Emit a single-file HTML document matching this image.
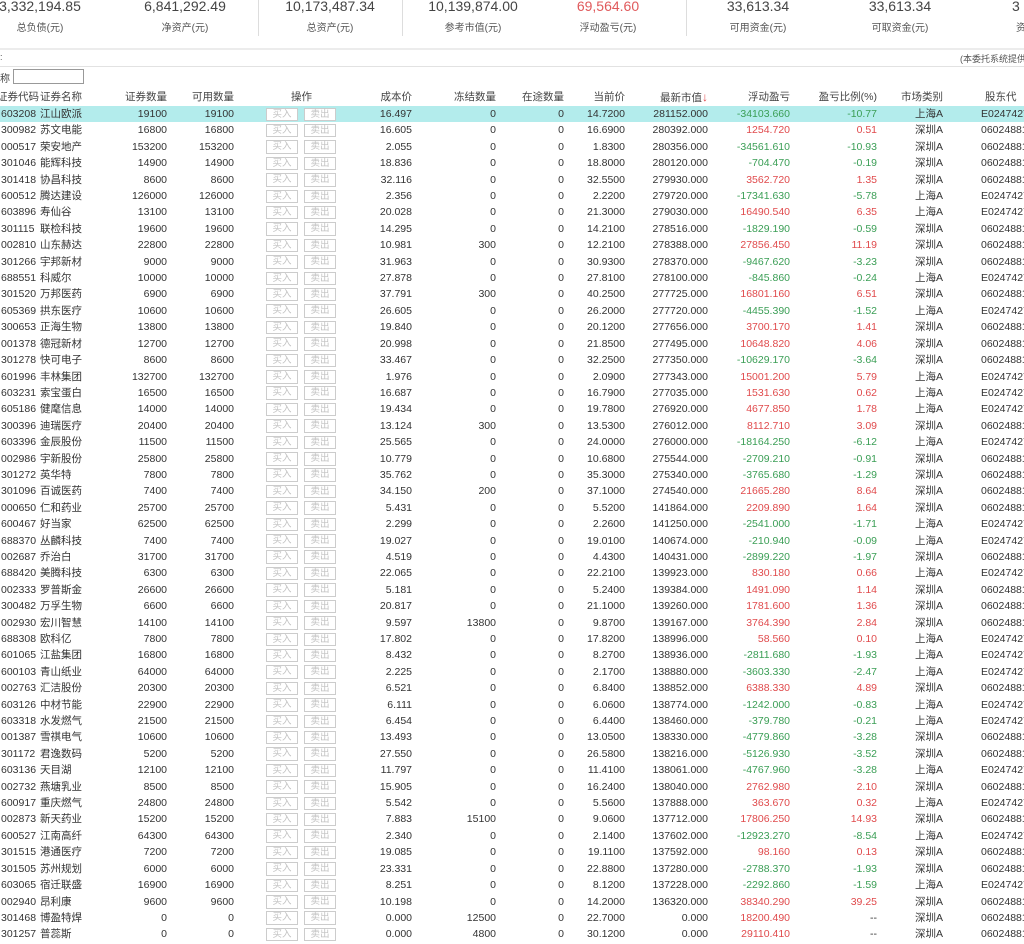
<!DOCTYPE html>
<html><head><meta charset="utf-8"><style>
*{margin:0;padding:0;box-sizing:border-box}
body{width:1024px;height:944px;overflow:hidden;background:#fff;font-family:"Liberation Sans","Noto Sans CJK SC",sans-serif;color:#333;position:relative}
.v{position:absolute;top:-2px;font-size:14px;color:#444;text-align:center;width:140px}
.l{position:absolute;top:19px;font-size:10px;color:#555;text-align:center;width:140px}
.sep{position:absolute;top:0;width:1px;height:36px;background:#ddd}
.hr{position:absolute;left:0;width:1024px;height:1px;background:#e2e2e2}
#t{position:absolute;left:0;top:89px;width:1024px;font-size:10.5px}
.r{position:relative;height:16.42px;line-height:16.42px;white-space:nowrap}
.r span{position:absolute;top:0}
.hl{background:#b3ecec}
.a{left:1px}.b{left:40px}
.c{right:857px}.d{right:790px}
.e{right:612px}.f{right:528px}.g{right:460px}.h{right:399px}.i{right:316px}.j{right:234px}.k{right:147px}.m{right:81px}.n{left:981px}
.bt{font-style:normal;display:inline-block;position:absolute;top:1.5px;height:13.5px;width:32px;border:1px solid #ccc;color:#c2c2c2;font-size:9.5px;line-height:11.5px;text-align:center;background:#fff}
.b1{left:266px}.b2{left:304px}
.R{color:#e04a4c}.G{color:#3a9e55}
.hd{color:#444}
</style></head><body>
<div class="v" style="left:-30px">3,332,194.85</div><div class="l" style="left:-30px">总负债(元)</div>
<div class="v" style="left:115px">6,841,292.49</div><div class="l" style="left:115px">净资产(元)</div>
<div class="sep" style="left:258px"></div>
<div class="v" style="left:260px">10,173,487.34</div><div class="l" style="left:260px">总资产(元)</div>
<div class="sep" style="left:402px"></div>
<div class="v" style="left:403px">10,139,874.00</div><div class="l" style="left:403px">参考市值(元)</div>
<div class="v R" style="left:538px;color:#e05a5c">69,564.60</div><div class="l" style="left:538px">浮动盈亏(元)</div>
<div class="sep" style="left:686px"></div>
<div class="v" style="left:688px">33,613.34</div><div class="l" style="left:688px">可用资金(元)</div>
<div class="v" style="left:830px">33,613.34</div><div class="l" style="left:830px">可取资金(元)</div>
<div class="v" style="left:1012px;text-align:left;width:30px">3</div><div class="l" style="left:1016px;text-align:left;width:30px">资</div>
<div class="hr" style="top:48px;height:2px;background:#ececec"></div>
<div style="position:absolute;left:0;top:52px;font-size:9px;color:#555">:</div>
<div style="position:absolute;left:960px;top:52px;font-size:9px;color:#555;white-space:nowrap">(本委托系统提供的</div>
<div class="hr" style="top:66px"></div>
<div style="position:absolute;left:0;top:70px;font-size:10px;color:#444">称</div>
<div style="position:absolute;left:13px;top:69px;width:71px;height:15px;border:1px solid #999"></div>
<div id="t">
<div class="r hd"><span class="a" style="left:-3px">证券代码</span><span class="b">证券名称</span><span class="c">证券数量</span><span class="d">可用数量</span><span style="left:291px">操作</span><span class="e">成本价</span><span class="f">冻结数量</span><span class="g">在途数量</span><span class="h">当前价</span><span class="i">最新市值<b style="color:#e04a4c;font-weight:normal;font-size:12px">↓</b></span><span class="j">浮动盈亏</span><span class="k">盈亏比例(%)</span><span class="m">市场类别</span><span class="n" style="left:985px">股东代</span></div>
<div style="height:0.6px"></div>
<div class="r hl"><span class="a">603208</span><span class="b">江山欧派</span><span class="c">19100</span><span class="d">19100</span><i class="bt b1">买入</i><i class="bt b2">卖出</i><span class="e">16.497</span><span class="f">0</span><span class="g">0</span><span class="h">14.7200</span><span class="i">281152.000</span><span class="j G">-34103.660</span><span class="k G">-10.77</span><span class="m">上海A</span><span class="n">E024742743</span></div>
<div class="r"><span class="a">300982</span><span class="b">苏文电能</span><span class="c">16800</span><span class="d">16800</span><i class="bt b1">买入</i><i class="bt b2">卖出</i><span class="e">16.605</span><span class="f">0</span><span class="g">0</span><span class="h">16.6900</span><span class="i">280392.000</span><span class="j R">1254.720</span><span class="k R">0.51</span><span class="m">深圳A</span><span class="n">0602488123</span></div>
<div class="r"><span class="a">000517</span><span class="b">荣安地产</span><span class="c">153200</span><span class="d">153200</span><i class="bt b1">买入</i><i class="bt b2">卖出</i><span class="e">2.055</span><span class="f">0</span><span class="g">0</span><span class="h">1.8300</span><span class="i">280356.000</span><span class="j G">-34561.610</span><span class="k G">-10.93</span><span class="m">深圳A</span><span class="n">0602488123</span></div>
<div class="r"><span class="a">301046</span><span class="b">能辉科技</span><span class="c">14900</span><span class="d">14900</span><i class="bt b1">买入</i><i class="bt b2">卖出</i><span class="e">18.836</span><span class="f">0</span><span class="g">0</span><span class="h">18.8000</span><span class="i">280120.000</span><span class="j G">-704.470</span><span class="k G">-0.19</span><span class="m">深圳A</span><span class="n">0602488123</span></div>
<div class="r"><span class="a">301418</span><span class="b">协昌科技</span><span class="c">8600</span><span class="d">8600</span><i class="bt b1">买入</i><i class="bt b2">卖出</i><span class="e">32.116</span><span class="f">0</span><span class="g">0</span><span class="h">32.5500</span><span class="i">279930.000</span><span class="j R">3562.720</span><span class="k R">1.35</span><span class="m">深圳A</span><span class="n">0602488123</span></div>
<div class="r"><span class="a">600512</span><span class="b">腾达建设</span><span class="c">126000</span><span class="d">126000</span><i class="bt b1">买入</i><i class="bt b2">卖出</i><span class="e">2.356</span><span class="f">0</span><span class="g">0</span><span class="h">2.2200</span><span class="i">279720.000</span><span class="j G">-17341.630</span><span class="k G">-5.78</span><span class="m">上海A</span><span class="n">E024742743</span></div>
<div class="r"><span class="a">603896</span><span class="b">寿仙谷</span><span class="c">13100</span><span class="d">13100</span><i class="bt b1">买入</i><i class="bt b2">卖出</i><span class="e">20.028</span><span class="f">0</span><span class="g">0</span><span class="h">21.3000</span><span class="i">279030.000</span><span class="j R">16490.540</span><span class="k R">6.35</span><span class="m">上海A</span><span class="n">E024742743</span></div>
<div class="r"><span class="a">301115</span><span class="b">联检科技</span><span class="c">19600</span><span class="d">19600</span><i class="bt b1">买入</i><i class="bt b2">卖出</i><span class="e">14.295</span><span class="f">0</span><span class="g">0</span><span class="h">14.2100</span><span class="i">278516.000</span><span class="j G">-1829.190</span><span class="k G">-0.59</span><span class="m">深圳A</span><span class="n">0602488123</span></div>
<div class="r"><span class="a">002810</span><span class="b">山东赫达</span><span class="c">22800</span><span class="d">22800</span><i class="bt b1">买入</i><i class="bt b2">卖出</i><span class="e">10.981</span><span class="f">300</span><span class="g">0</span><span class="h">12.2100</span><span class="i">278388.000</span><span class="j R">27856.450</span><span class="k R">11.19</span><span class="m">深圳A</span><span class="n">0602488123</span></div>
<div class="r"><span class="a">301266</span><span class="b">宇邦新材</span><span class="c">9000</span><span class="d">9000</span><i class="bt b1">买入</i><i class="bt b2">卖出</i><span class="e">31.963</span><span class="f">0</span><span class="g">0</span><span class="h">30.9300</span><span class="i">278370.000</span><span class="j G">-9467.620</span><span class="k G">-3.23</span><span class="m">深圳A</span><span class="n">0602488123</span></div>
<div class="r"><span class="a">688551</span><span class="b">科威尔</span><span class="c">10000</span><span class="d">10000</span><i class="bt b1">买入</i><i class="bt b2">卖出</i><span class="e">27.878</span><span class="f">0</span><span class="g">0</span><span class="h">27.8100</span><span class="i">278100.000</span><span class="j G">-845.860</span><span class="k G">-0.24</span><span class="m">上海A</span><span class="n">E024742743</span></div>
<div class="r"><span class="a">301520</span><span class="b">万邦医药</span><span class="c">6900</span><span class="d">6900</span><i class="bt b1">买入</i><i class="bt b2">卖出</i><span class="e">37.791</span><span class="f">300</span><span class="g">0</span><span class="h">40.2500</span><span class="i">277725.000</span><span class="j R">16801.160</span><span class="k R">6.51</span><span class="m">深圳A</span><span class="n">0602488123</span></div>
<div class="r"><span class="a">605369</span><span class="b">拱东医疗</span><span class="c">10600</span><span class="d">10600</span><i class="bt b1">买入</i><i class="bt b2">卖出</i><span class="e">26.605</span><span class="f">0</span><span class="g">0</span><span class="h">26.2000</span><span class="i">277720.000</span><span class="j G">-4455.390</span><span class="k G">-1.52</span><span class="m">上海A</span><span class="n">E024742743</span></div>
<div class="r"><span class="a">300653</span><span class="b">正海生物</span><span class="c">13800</span><span class="d">13800</span><i class="bt b1">买入</i><i class="bt b2">卖出</i><span class="e">19.840</span><span class="f">0</span><span class="g">0</span><span class="h">20.1200</span><span class="i">277656.000</span><span class="j R">3700.170</span><span class="k R">1.41</span><span class="m">深圳A</span><span class="n">0602488123</span></div>
<div class="r"><span class="a">001378</span><span class="b">德冠新材</span><span class="c">12700</span><span class="d">12700</span><i class="bt b1">买入</i><i class="bt b2">卖出</i><span class="e">20.998</span><span class="f">0</span><span class="g">0</span><span class="h">21.8500</span><span class="i">277495.000</span><span class="j R">10648.820</span><span class="k R">4.06</span><span class="m">深圳A</span><span class="n">0602488123</span></div>
<div class="r"><span class="a">301278</span><span class="b">快可电子</span><span class="c">8600</span><span class="d">8600</span><i class="bt b1">买入</i><i class="bt b2">卖出</i><span class="e">33.467</span><span class="f">0</span><span class="g">0</span><span class="h">32.2500</span><span class="i">277350.000</span><span class="j G">-10629.170</span><span class="k G">-3.64</span><span class="m">深圳A</span><span class="n">0602488123</span></div>
<div class="r"><span class="a">601996</span><span class="b">丰林集团</span><span class="c">132700</span><span class="d">132700</span><i class="bt b1">买入</i><i class="bt b2">卖出</i><span class="e">1.976</span><span class="f">0</span><span class="g">0</span><span class="h">2.0900</span><span class="i">277343.000</span><span class="j R">15001.200</span><span class="k R">5.79</span><span class="m">上海A</span><span class="n">E024742743</span></div>
<div class="r"><span class="a">603231</span><span class="b">索宝蛋白</span><span class="c">16500</span><span class="d">16500</span><i class="bt b1">买入</i><i class="bt b2">卖出</i><span class="e">16.687</span><span class="f">0</span><span class="g">0</span><span class="h">16.7900</span><span class="i">277035.000</span><span class="j R">1531.630</span><span class="k R">0.62</span><span class="m">上海A</span><span class="n">E024742743</span></div>
<div class="r"><span class="a">605186</span><span class="b">健麾信息</span><span class="c">14000</span><span class="d">14000</span><i class="bt b1">买入</i><i class="bt b2">卖出</i><span class="e">19.434</span><span class="f">0</span><span class="g">0</span><span class="h">19.7800</span><span class="i">276920.000</span><span class="j R">4677.850</span><span class="k R">1.78</span><span class="m">上海A</span><span class="n">E024742743</span></div>
<div class="r"><span class="a">300396</span><span class="b">迪瑞医疗</span><span class="c">20400</span><span class="d">20400</span><i class="bt b1">买入</i><i class="bt b2">卖出</i><span class="e">13.124</span><span class="f">300</span><span class="g">0</span><span class="h">13.5300</span><span class="i">276012.000</span><span class="j R">8112.710</span><span class="k R">3.09</span><span class="m">深圳A</span><span class="n">0602488123</span></div>
<div class="r"><span class="a">603396</span><span class="b">金辰股份</span><span class="c">11500</span><span class="d">11500</span><i class="bt b1">买入</i><i class="bt b2">卖出</i><span class="e">25.565</span><span class="f">0</span><span class="g">0</span><span class="h">24.0000</span><span class="i">276000.000</span><span class="j G">-18164.250</span><span class="k G">-6.12</span><span class="m">上海A</span><span class="n">E024742743</span></div>
<div class="r"><span class="a">002986</span><span class="b">宇新股份</span><span class="c">25800</span><span class="d">25800</span><i class="bt b1">买入</i><i class="bt b2">卖出</i><span class="e">10.779</span><span class="f">0</span><span class="g">0</span><span class="h">10.6800</span><span class="i">275544.000</span><span class="j G">-2709.210</span><span class="k G">-0.91</span><span class="m">深圳A</span><span class="n">0602488123</span></div>
<div class="r"><span class="a">301272</span><span class="b">英华特</span><span class="c">7800</span><span class="d">7800</span><i class="bt b1">买入</i><i class="bt b2">卖出</i><span class="e">35.762</span><span class="f">0</span><span class="g">0</span><span class="h">35.3000</span><span class="i">275340.000</span><span class="j G">-3765.680</span><span class="k G">-1.29</span><span class="m">深圳A</span><span class="n">0602488123</span></div>
<div class="r"><span class="a">301096</span><span class="b">百诚医药</span><span class="c">7400</span><span class="d">7400</span><i class="bt b1">买入</i><i class="bt b2">卖出</i><span class="e">34.150</span><span class="f">200</span><span class="g">0</span><span class="h">37.1000</span><span class="i">274540.000</span><span class="j R">21665.280</span><span class="k R">8.64</span><span class="m">深圳A</span><span class="n">0602488123</span></div>
<div class="r"><span class="a">000650</span><span class="b">仁和药业</span><span class="c">25700</span><span class="d">25700</span><i class="bt b1">买入</i><i class="bt b2">卖出</i><span class="e">5.431</span><span class="f">0</span><span class="g">0</span><span class="h">5.5200</span><span class="i">141864.000</span><span class="j R">2209.890</span><span class="k R">1.64</span><span class="m">深圳A</span><span class="n">0602488123</span></div>
<div class="r"><span class="a">600467</span><span class="b">好当家</span><span class="c">62500</span><span class="d">62500</span><i class="bt b1">买入</i><i class="bt b2">卖出</i><span class="e">2.299</span><span class="f">0</span><span class="g">0</span><span class="h">2.2600</span><span class="i">141250.000</span><span class="j G">-2541.000</span><span class="k G">-1.71</span><span class="m">上海A</span><span class="n">E024742743</span></div>
<div class="r"><span class="a">688370</span><span class="b">丛麟科技</span><span class="c">7400</span><span class="d">7400</span><i class="bt b1">买入</i><i class="bt b2">卖出</i><span class="e">19.027</span><span class="f">0</span><span class="g">0</span><span class="h">19.0100</span><span class="i">140674.000</span><span class="j G">-210.940</span><span class="k G">-0.09</span><span class="m">上海A</span><span class="n">E024742743</span></div>
<div class="r"><span class="a">002687</span><span class="b">乔治白</span><span class="c">31700</span><span class="d">31700</span><i class="bt b1">买入</i><i class="bt b2">卖出</i><span class="e">4.519</span><span class="f">0</span><span class="g">0</span><span class="h">4.4300</span><span class="i">140431.000</span><span class="j G">-2899.220</span><span class="k G">-1.97</span><span class="m">深圳A</span><span class="n">0602488123</span></div>
<div class="r"><span class="a">688420</span><span class="b">美腾科技</span><span class="c">6300</span><span class="d">6300</span><i class="bt b1">买入</i><i class="bt b2">卖出</i><span class="e">22.065</span><span class="f">0</span><span class="g">0</span><span class="h">22.2100</span><span class="i">139923.000</span><span class="j R">830.180</span><span class="k R">0.66</span><span class="m">上海A</span><span class="n">E024742743</span></div>
<div class="r"><span class="a">002333</span><span class="b">罗普斯金</span><span class="c">26600</span><span class="d">26600</span><i class="bt b1">买入</i><i class="bt b2">卖出</i><span class="e">5.181</span><span class="f">0</span><span class="g">0</span><span class="h">5.2400</span><span class="i">139384.000</span><span class="j R">1491.090</span><span class="k R">1.14</span><span class="m">深圳A</span><span class="n">0602488123</span></div>
<div class="r"><span class="a">300482</span><span class="b">万孚生物</span><span class="c">6600</span><span class="d">6600</span><i class="bt b1">买入</i><i class="bt b2">卖出</i><span class="e">20.817</span><span class="f">0</span><span class="g">0</span><span class="h">21.1000</span><span class="i">139260.000</span><span class="j R">1781.600</span><span class="k R">1.36</span><span class="m">深圳A</span><span class="n">0602488123</span></div>
<div class="r"><span class="a">002930</span><span class="b">宏川智慧</span><span class="c">14100</span><span class="d">14100</span><i class="bt b1">买入</i><i class="bt b2">卖出</i><span class="e">9.597</span><span class="f">13800</span><span class="g">0</span><span class="h">9.8700</span><span class="i">139167.000</span><span class="j R">3764.390</span><span class="k R">2.84</span><span class="m">深圳A</span><span class="n">0602488123</span></div>
<div class="r"><span class="a">688308</span><span class="b">欧科亿</span><span class="c">7800</span><span class="d">7800</span><i class="bt b1">买入</i><i class="bt b2">卖出</i><span class="e">17.802</span><span class="f">0</span><span class="g">0</span><span class="h">17.8200</span><span class="i">138996.000</span><span class="j R">58.560</span><span class="k R">0.10</span><span class="m">上海A</span><span class="n">E024742743</span></div>
<div class="r"><span class="a">601065</span><span class="b">江盐集团</span><span class="c">16800</span><span class="d">16800</span><i class="bt b1">买入</i><i class="bt b2">卖出</i><span class="e">8.432</span><span class="f">0</span><span class="g">0</span><span class="h">8.2700</span><span class="i">138936.000</span><span class="j G">-2811.680</span><span class="k G">-1.93</span><span class="m">上海A</span><span class="n">E024742743</span></div>
<div class="r"><span class="a">600103</span><span class="b">青山纸业</span><span class="c">64000</span><span class="d">64000</span><i class="bt b1">买入</i><i class="bt b2">卖出</i><span class="e">2.225</span><span class="f">0</span><span class="g">0</span><span class="h">2.1700</span><span class="i">138880.000</span><span class="j G">-3603.330</span><span class="k G">-2.47</span><span class="m">上海A</span><span class="n">E024742743</span></div>
<div class="r"><span class="a">002763</span><span class="b">汇洁股份</span><span class="c">20300</span><span class="d">20300</span><i class="bt b1">买入</i><i class="bt b2">卖出</i><span class="e">6.521</span><span class="f">0</span><span class="g">0</span><span class="h">6.8400</span><span class="i">138852.000</span><span class="j R">6388.330</span><span class="k R">4.89</span><span class="m">深圳A</span><span class="n">0602488123</span></div>
<div class="r"><span class="a">603126</span><span class="b">中材节能</span><span class="c">22900</span><span class="d">22900</span><i class="bt b1">买入</i><i class="bt b2">卖出</i><span class="e">6.111</span><span class="f">0</span><span class="g">0</span><span class="h">6.0600</span><span class="i">138774.000</span><span class="j G">-1242.000</span><span class="k G">-0.83</span><span class="m">上海A</span><span class="n">E024742743</span></div>
<div class="r"><span class="a">603318</span><span class="b">水发燃气</span><span class="c">21500</span><span class="d">21500</span><i class="bt b1">买入</i><i class="bt b2">卖出</i><span class="e">6.454</span><span class="f">0</span><span class="g">0</span><span class="h">6.4400</span><span class="i">138460.000</span><span class="j G">-379.780</span><span class="k G">-0.21</span><span class="m">上海A</span><span class="n">E024742743</span></div>
<div class="r"><span class="a">001387</span><span class="b">雪祺电气</span><span class="c">10600</span><span class="d">10600</span><i class="bt b1">买入</i><i class="bt b2">卖出</i><span class="e">13.493</span><span class="f">0</span><span class="g">0</span><span class="h">13.0500</span><span class="i">138330.000</span><span class="j G">-4779.860</span><span class="k G">-3.28</span><span class="m">深圳A</span><span class="n">0602488123</span></div>
<div class="r"><span class="a">301172</span><span class="b">君逸数码</span><span class="c">5200</span><span class="d">5200</span><i class="bt b1">买入</i><i class="bt b2">卖出</i><span class="e">27.550</span><span class="f">0</span><span class="g">0</span><span class="h">26.5800</span><span class="i">138216.000</span><span class="j G">-5126.930</span><span class="k G">-3.52</span><span class="m">深圳A</span><span class="n">0602488123</span></div>
<div class="r"><span class="a">603136</span><span class="b">天目湖</span><span class="c">12100</span><span class="d">12100</span><i class="bt b1">买入</i><i class="bt b2">卖出</i><span class="e">11.797</span><span class="f">0</span><span class="g">0</span><span class="h">11.4100</span><span class="i">138061.000</span><span class="j G">-4767.960</span><span class="k G">-3.28</span><span class="m">上海A</span><span class="n">E024742743</span></div>
<div class="r"><span class="a">002732</span><span class="b">燕塘乳业</span><span class="c">8500</span><span class="d">8500</span><i class="bt b1">买入</i><i class="bt b2">卖出</i><span class="e">15.905</span><span class="f">0</span><span class="g">0</span><span class="h">16.2400</span><span class="i">138040.000</span><span class="j R">2762.980</span><span class="k R">2.10</span><span class="m">深圳A</span><span class="n">0602488123</span></div>
<div class="r"><span class="a">600917</span><span class="b">重庆燃气</span><span class="c">24800</span><span class="d">24800</span><i class="bt b1">买入</i><i class="bt b2">卖出</i><span class="e">5.542</span><span class="f">0</span><span class="g">0</span><span class="h">5.5600</span><span class="i">137888.000</span><span class="j R">363.670</span><span class="k R">0.32</span><span class="m">上海A</span><span class="n">E024742743</span></div>
<div class="r"><span class="a">002873</span><span class="b">新天药业</span><span class="c">15200</span><span class="d">15200</span><i class="bt b1">买入</i><i class="bt b2">卖出</i><span class="e">7.883</span><span class="f">15100</span><span class="g">0</span><span class="h">9.0600</span><span class="i">137712.000</span><span class="j R">17806.250</span><span class="k R">14.93</span><span class="m">深圳A</span><span class="n">0602488123</span></div>
<div class="r"><span class="a">600527</span><span class="b">江南高纤</span><span class="c">64300</span><span class="d">64300</span><i class="bt b1">买入</i><i class="bt b2">卖出</i><span class="e">2.340</span><span class="f">0</span><span class="g">0</span><span class="h">2.1400</span><span class="i">137602.000</span><span class="j G">-12923.270</span><span class="k G">-8.54</span><span class="m">上海A</span><span class="n">E024742743</span></div>
<div class="r"><span class="a">301515</span><span class="b">港通医疗</span><span class="c">7200</span><span class="d">7200</span><i class="bt b1">买入</i><i class="bt b2">卖出</i><span class="e">19.085</span><span class="f">0</span><span class="g">0</span><span class="h">19.1100</span><span class="i">137592.000</span><span class="j R">98.160</span><span class="k R">0.13</span><span class="m">深圳A</span><span class="n">0602488123</span></div>
<div class="r"><span class="a">301505</span><span class="b">苏州规划</span><span class="c">6000</span><span class="d">6000</span><i class="bt b1">买入</i><i class="bt b2">卖出</i><span class="e">23.331</span><span class="f">0</span><span class="g">0</span><span class="h">22.8800</span><span class="i">137280.000</span><span class="j G">-2788.370</span><span class="k G">-1.93</span><span class="m">深圳A</span><span class="n">0602488123</span></div>
<div class="r"><span class="a">603065</span><span class="b">宿迁联盛</span><span class="c">16900</span><span class="d">16900</span><i class="bt b1">买入</i><i class="bt b2">卖出</i><span class="e">8.251</span><span class="f">0</span><span class="g">0</span><span class="h">8.1200</span><span class="i">137228.000</span><span class="j G">-2292.860</span><span class="k G">-1.59</span><span class="m">上海A</span><span class="n">E024742743</span></div>
<div class="r"><span class="a">002940</span><span class="b">昂利康</span><span class="c">9600</span><span class="d">9600</span><i class="bt b1">买入</i><i class="bt b2">卖出</i><span class="e">10.198</span><span class="f">0</span><span class="g">0</span><span class="h">14.2000</span><span class="i">136320.000</span><span class="j R">38340.290</span><span class="k R">39.25</span><span class="m">深圳A</span><span class="n">0602488123</span></div>
<div class="r"><span class="a">301468</span><span class="b">博盈特焊</span><span class="c">0</span><span class="d">0</span><i class="bt b1">买入</i><i class="bt b2">卖出</i><span class="e">0.000</span><span class="f">12500</span><span class="g">0</span><span class="h">22.7000</span><span class="i">0.000</span><span class="j R">18200.490</span><span class="k">--</span><span class="m">深圳A</span><span class="n">0602488123</span></div>
<div class="r"><span class="a">301257</span><span class="b">普蕊斯</span><span class="c">0</span><span class="d">0</span><i class="bt b1">买入</i><i class="bt b2">卖出</i><span class="e">0.000</span><span class="f">4800</span><span class="g">0</span><span class="h">30.1200</span><span class="i">0.000</span><span class="j R">29110.410</span><span class="k">--</span><span class="m">深圳A</span><span class="n">0602488123</span></div>
</div>
</body></html>
